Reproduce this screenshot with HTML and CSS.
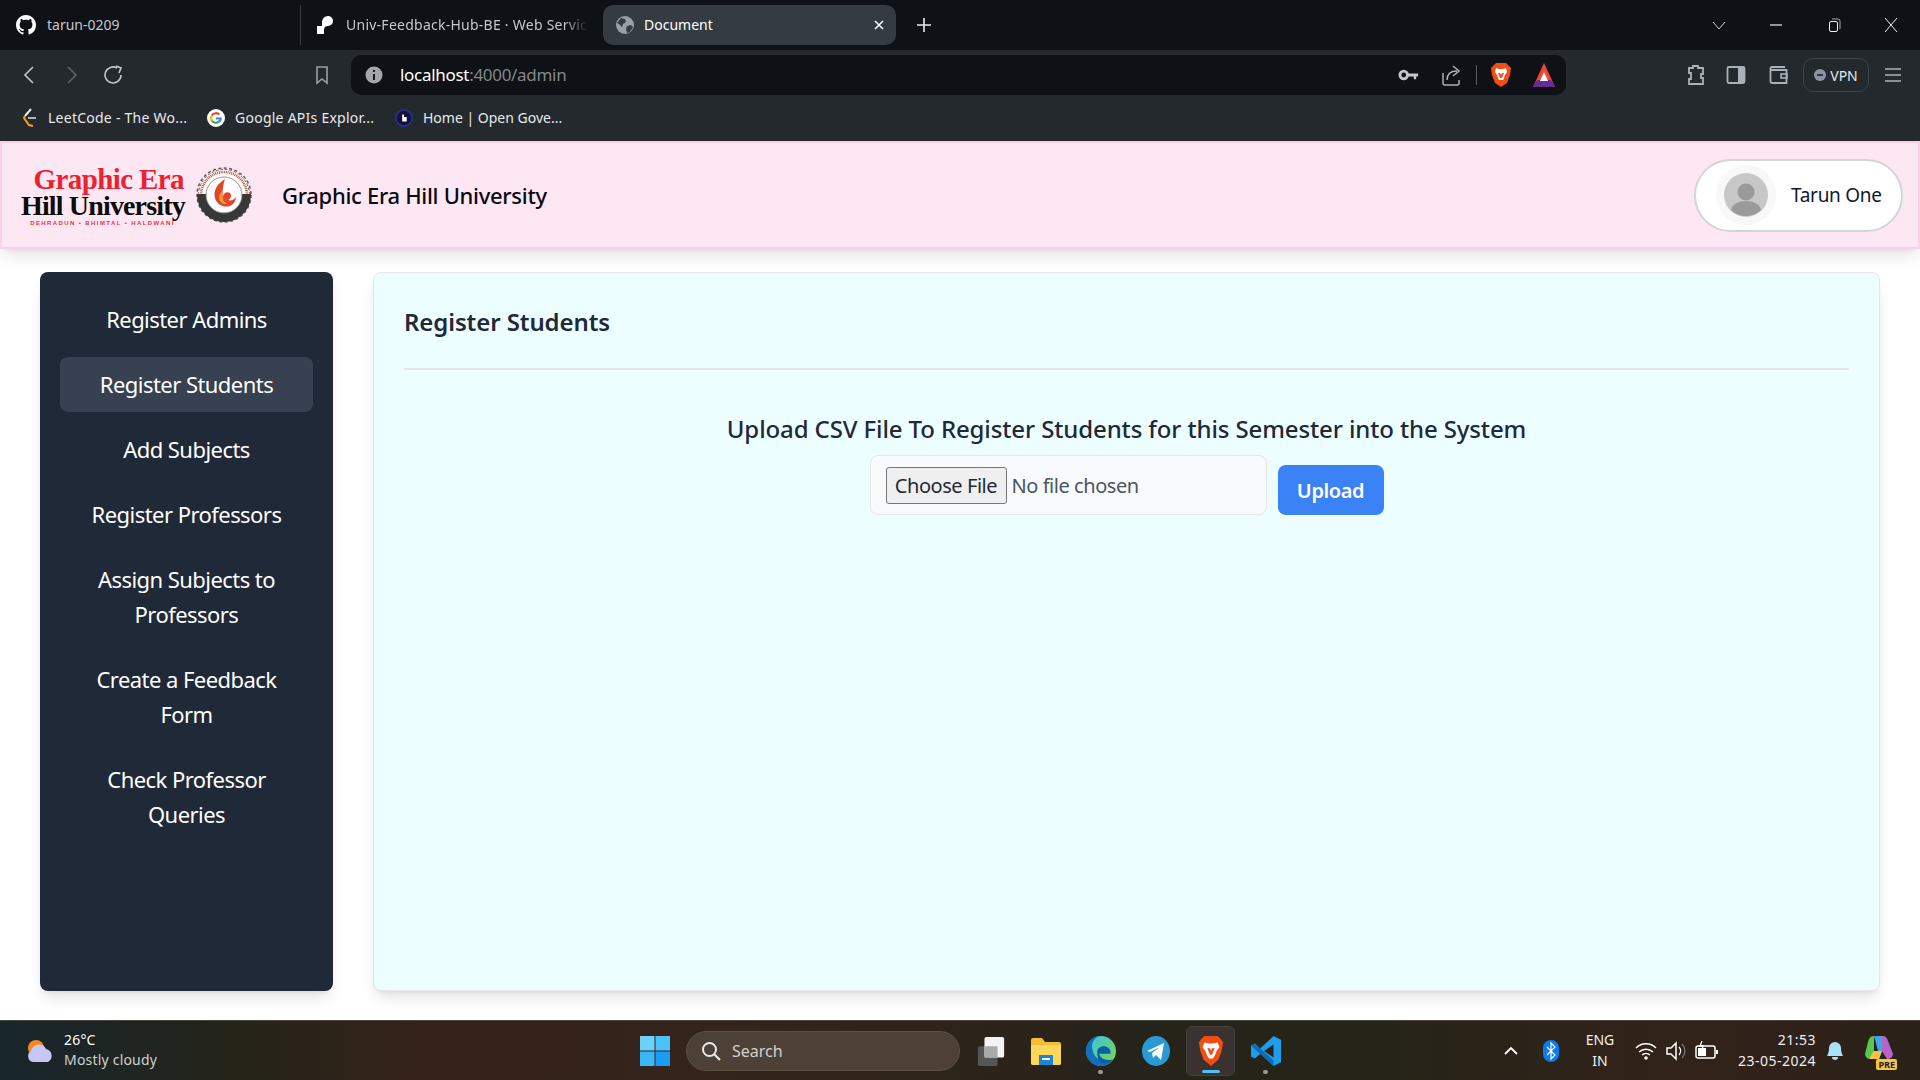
FILE: index.html
```html
<!DOCTYPE html>
<html lang="en">
<head>
    <meta charset="UTF-8">
    <title>Document</title>
    <link rel="stylesheet" href="styles.css">
</head>
<body>
<div class="screen">
    <!-- browser chrome -->
    <div class="tabstrip">
        <div class="tab tab-github">
            <svg class="tab-icon" viewBox="0 0 16 16"><path fill="#fff" d="M8 0C3.58 0 0 3.58 0 8c0 3.54 2.29 6.53 5.47 7.59.4.07.55-.17.55-.38 0-.19-.01-.82-.01-1.49-2.01.37-2.53-.49-2.69-.94-.09-.23-.48-.94-.82-1.13-.28-.15-.68-.52-.01-.53.63-.01 1.08.58 1.23.82.72 1.21 1.87.87 2.33.66.07-.52.28-.87.51-1.07-1.78-.2-3.64-.89-3.64-3.95 0-.87.31-1.59.82-2.15-.08-.2-.36-1.02.08-2.12 0 0 .67-.21 2.2.82.64-.18 1.32-.27 2-.27.68 0 1.36.09 2 .27 1.53-1.04 2.2-.82 2.2-.82.44 1.1.16 1.92.08 2.12.51.56.82 1.27.82 2.15 0 3.07-1.87 3.75-3.65 3.95.29.25.54.73.54 1.48 0 1.07-.01 1.93-.01 2.2 0 .21.15.46.55.38A8.013 8.013 0 0016 8c0-4.42-3.58-8-8-8z"/></svg>
            <span class="tab-title">tarun-0209</span>
        </div>
        <div class="tab tab-render">
            <svg class="tab-icon" viewBox="0 0 20 20"><path fill="#fff" d="M13 1a5 5 0 0 1 5 5 5 5 0 0 1-5 5 4 4 0 0 0-4 4v4H2v-8h5V7a6 6 0 0 1 6-6z"/></svg>
            <span class="tab-title">Univ-Feedback-Hub-BE · Web Servic</span>
        </div>
        <div class="tab tab-active">
            <svg class="tab-icon" viewBox="0 0 20 20"><circle cx="10" cy="10" r="9" fill="#9aa0a6"/><path fill="#343b41" d="M6 3l4 1 1 3-3 2-1 3-3-3-2-1zM12 11l4-1 2 2-3 5-3 1-1-4z"/></svg>
            <span class="tab-title">Document</span>
            <svg class="tab-close" viewBox="0 0 10 10"><path d="M1 1l8 8M9 1l-8 8" stroke="#fff" stroke-width="1.6"/></svg>
        </div>
        <svg class="tab-new" viewBox="0 0 16 16"><path d="M8 1v14M1 8h14" stroke="#e8eaed" stroke-width="1.6"/></svg>
        <div class="spacer"></div>
        <svg class="win-icon win-chevron" viewBox="0 0 14 14"><path d="M1 4l6 7 6-7" fill="none" stroke="#c8ccd0"/></svg>
        <svg class="win-icon win-min" viewBox="0 0 14 14"><path d="M1 7h12" stroke="#eee" stroke-width="1.2"/></svg>
        <svg class="win-icon win-restore" viewBox="0 0 14 14"><rect x="2.5" y="3.5" width="8" height="10" rx="1.5" fill="none" stroke="#eee"/><path d="M5 1h6a2 2 0 0 1 2 2v8" fill="none" stroke="#aaa"/></svg>
        <svg class="win-icon win-close" viewBox="0 0 14 14"><path d="M1 0l12 14M13 0L1 14" stroke="#eee"/></svg>
    </div>

    <div class="toolbar">
        <svg class="nav-icon nav-back" viewBox="0 0 20 20"><path d="M13 2l-8 8 8 8" fill="none" stroke="#c4c8cc" stroke-width="1.6"/></svg>
        <svg class="nav-icon nav-forward" viewBox="0 0 20 20"><path d="M7 2l8 8-8 8" fill="none" stroke="#5d6469" stroke-width="1.6"/></svg>
        <svg class="nav-icon nav-reload" viewBox="0 0 20 20"><path d="M14 3a8 8 0 1 0 4 7" fill="none" stroke="#c4c8cc" stroke-width="1.6"/><path d="M13 1l5 2-2 5" fill="none" stroke="#c4c8cc" stroke-width="1.6"/></svg>
        <svg class="nav-icon nav-bookmark" viewBox="0 0 20 20"><path d="M5 2h10v16l-5-4-5 4z" fill="none" stroke="#9aa1a6" stroke-width="1.6"/></svg>
        <div class="addressbar">
            <svg class="addr-info" viewBox="0 0 18 18"><circle cx="9" cy="9" r="8.500" fill="#a3a7ab"/><path d="M9 8v6M9 4v2" stroke="#16191c" stroke-width="2"/></svg>
            <span class="addr-url"><b>localhost</b>:4000/admin</span>
            <div class="spacer"></div>
            <svg class="addr-key" viewBox="0 0 22 14"><circle cx="6" cy="7" r="4" fill="none" stroke="#c4c8cc" stroke-width="3"/><path d="M10 5.500h11v3h-2v3h-2.500v-3H10z" fill="#c4c8cc"/></svg>
            <svg class="addr-share" viewBox="0 0 20 22"><path d="M2 9v10a2 2 0 0 0 2 2h12a2 2 0 0 0 2-2v-3" fill="none" stroke="#aab0b4" stroke-width="1.500"/><path d="M6 16c0-6 4-9 10-9M12 2l6 5-6 5" fill="none" stroke="#aab0b4" stroke-width="1.500"/></svg>
            <span class="addr-sep"></span>
            <svg class="addr-brave" viewBox="0 0 20 24"><path fill="#f04e13" d="M5 0h10l3 3 2 2-1 7-3 8-6 4-6-4-3-8-1-7 2-2z"/><path fill="#fff" d="M5 5l3 1h4l3-1 1 4-2 3-1 3-1 2h-4l-1-2-1-3-2-3z"/><path fill="#f04e13" d="M7 10h2l1 2 1-2h2l-2 5H9z"/></svg>
            <svg class="addr-bat" viewBox="0 0 22 24"><path fill="#f0492f" d="M11 0l11 24H0z"/><path fill="#662d91" d="M0 24l4-7h14l4 7z"/><path fill="#fff" d="M11 9l4 9H7z"/></svg>
        </div>
        <div class="spacer"></div>
        <svg class="tool-icon tool-ext" viewBox="0 0 20 22"><path d="M3 4h4V2h5v2h5v6h-2v4h2v6H3v-5h2v-6H3z" fill="none" stroke="#a9b2b8" stroke-width="1.800"/></svg>
        <svg class="tool-icon tool-side" viewBox="0 0 20 20"><rect x="1.500" y="2" width="17" height="16" rx="1.500" fill="none" stroke="#a9b2b8" stroke-width="1.800"/><rect x="12" y="2" width="6.500" height="16" fill="#a9b2b8"/></svg>
        <svg class="tool-icon tool-wallet" viewBox="0 0 20 20"><path d="M16 2H3a1.500 1.500 0 0 0-1.500 1.500v13A1.500 1.500 0 0 0 3 18h14.500V5H2" fill="none" stroke="#a9b2b8" stroke-width="1.800"/><rect x="12" y="9" width="6" height="4" fill="none" stroke="#a9b2b8" stroke-width="1.600"/></svg>
        <div class="vpn-pill">
            <svg class="vpn-dot" viewBox="0 0 12 12"><circle cx="6" cy="6" r="6" fill="#8d93a6"/><path d="M3 6h6" stroke="#1d2226" stroke-width="1.600"/></svg>
            <span>VPN</span>
        </div>
        <svg class="tool-icon tool-menu" viewBox="0 0 18 16"><path d="M1 2h16M1 8h16M1 14h16" stroke="#a9b2b8" stroke-width="1.600"/></svg>
    </div>

    <div class="bookmarks">
        <div class="bookmark bm-leet">
            <svg class="bm-icon" viewBox="0 0 18 20"><path d="M11 1L5 8" fill="none" stroke="#e8e8e8" stroke-width="2"/><path d="M5 8l-1 2 5 7 4 1" fill="none" stroke="#f7a21c" stroke-width="2"/><path d="M8 10h8" stroke="#b3b3b3" stroke-width="2"/></svg>
            <span>LeetCode - The Wo...</span>
        </div>
        <div class="bookmark bm-google">
            <svg class="bm-icon" viewBox="0 0 20 20"><circle cx="10" cy="10" r="10" fill="#fff"/><path d="M16 10.500h-6" stroke="#4285f4" stroke-width="2.400"/><path d="M15.500 10.500a5.500 5.500 0 0 1-2 3.500" fill="none" stroke="#4285f4" stroke-width="2.400"/><path d="M13.800 13.700A5.500 5.500 0 0 1 5.400 13" fill="none" stroke="#34a853" stroke-width="2.400"/><path d="M5.400 13a5.500 5.500 0 0 1 0-6" fill="none" stroke="#fbbc05" stroke-width="2.400"/><path d="M5.400 7a5.500 5.500 0 0 1 8.300-.800" fill="none" stroke="#ea4335" stroke-width="2.400"/></svg>
            <span>Google APIs Explor...</span>
        </div>
        <div class="bookmark bm-gov">
            <svg class="bm-icon" viewBox="0 0 20 20"><circle cx="10" cy="10" r="9" fill="#12123a" stroke="#2b2f8f" stroke-width="2"/><path d="M8 6h2v3h3v5H8z" fill="#fff"/></svg>
            <span>Home | Open Gove...</span>
        </div>
    </div>

    <!-- the actual page -->
    <header class="site-header">
        <div class="logo">
            <div class="logo-text">
                <div class="logo-red">Graphic Era</div>
                <div class="logo-black">Hill University</div>
                <div class="logo-places">DEHRADUN • BHIMTAL • HALDWANI</div>
            </div>
            <svg class="logo-seal" viewBox="0 0 56 56">
                <circle cx="28" cy="28" r="26" fill="#fff"/>
                <path d="M5 28a23 23 0 0 1 46 0" fill="none" stroke="#c9553f" stroke-width="2.600" stroke-dasharray="1 .8"/>
                <path d="M2.500 28a25.500 25.500 0 0 1 51 0" fill="none" stroke="#666" stroke-width="1" stroke-dasharray="3 1.500"/>
                <path d="M1 27h9a18 18 0 0 0 36 0h9v1a27 27 0 0 1-54 0z" fill="#383838"/>
                <circle cx="28" cy="28" r="27" fill="none" stroke="#383838" stroke-width="1.500" stroke-dasharray="3 2.500" opacity=".8"/>
                <circle cx="28" cy="28" r="18" fill="#fff" stroke="#777" stroke-width=".8"/>
                <path d="M29 12c-8 5-12 12-10 19 2 7 9 10 15 8 4-2 6-5 6-9-2 3-5 4-8 3 3-1 4-5 2-7-3-2-7 0-7 4-1-6 0-12 2-18z" fill="#e2452a"/>
                <path d="M27 23c-3 3-5 7-3 11 2 3 5 4 8 2-3 0-5-2-5-5 0-3-1-5 0-8z" fill="#f59a3c"/>
            </svg>
        </div>
        <h1 class="site-title">Graphic Era Hill University</h1>
        <div class="spacer"></div>
        <div class="user-pill">
            <div class="avatar-halo">
                <svg class="avatar" viewBox="0 0 44 44"><circle cx="22" cy="22" r="22" fill="#c7c7c7"/><circle cx="22" cy="19" r="8.500" fill="#9a9a9a"/><path d="M7 37c1-6 8-9 15-9s14 3 15 9a22 22 0 0 1-30 0z" fill="#9a9a9a"/></svg>
            </div>
            <span class="user-name">Tarun One</span>
        </div>
    </header>

    <div class="content">
        <nav class="sidebar">
            <a class="side-link">Register Admins</a>
            <a class="side-link active">Register Students</a>
            <a class="side-link">Add Subjects</a>
            <a class="side-link">Register Professors</a>
            <a class="side-link">Assign Subjects to Professors</a>
            <a class="side-link">Create a Feedback Form</a>
            <a class="side-link">Check Professor Queries</a>
        </nav>
        <main class="panel">
            <h2 class="panel-title">Register Students</h2>
            <hr class="panel-rule">
            <h3 class="upload-title">Upload CSV File To Register Students for this Semester into the System</h3>
            <form class="upload-row">
                <div class="file-box">
                    <span class="file-button">Choose File</span>
                    <span class="file-label">No file chosen</span>
                </div>
                <button type="button" class="upload-button">Upload</button>
            </form>
        </main>
    </div>

    <!-- windows taskbar -->
    <div class="taskbar">
        <div class="weather">
            <svg class="weather-icon" viewBox="0 0 30 24"><circle cx="11" cy="9" r="8" fill="#f58a1f"/><path d="M8 23a6 6 0 0 1-2-11 8 8 0 0 1 15-2 7 7 0 0 1 2 13z" fill="#c6c6f7"/></svg>
            <div class="weather-text">
                <div class="weather-temp">26°C</div>
                <div class="weather-desc">Mostly cloudy</div>
            </div>
        </div>
        <svg class="win-logo" viewBox="0 0 30 30">
            <rect width="14.500" height="14.500" fill="#6bd3fb"/><rect x="15.500" width="14.500" height="14.500" fill="#4cc2fa"/>
            <rect y="15.500" width="14.500" height="14.500" fill="#3cb6fb"/><rect x="15.500" y="15.500" width="14.500" height="14.500" fill="#1a9cf5"/>
        </svg>
        <div class="search">
            <svg class="search-icon" viewBox="0 0 20 20"><circle cx="8.500" cy="8.500" r="6.500" fill="none" stroke="#e8e8e8" stroke-width="2"/><path d="M13 13l6 6" stroke="#e8e8e8" stroke-width="2.200"/></svg>
            <span>Search</span>
        </div>
        <div class="task-apps">
            <div class="task-app">
                <svg class="task-icon" viewBox="0 0 30 32"><rect x="1" y="11" width="21" height="21" rx="2" fill="#565656"/><rect x="8" y="1" width="21" height="22" rx="2" fill="#f3f3f3"/><rect x="8" y="11" width="14" height="12" fill="#a9a9a9"/></svg>
            </div>
            <div class="task-app">
                <svg class="task-icon" viewBox="0 0 30 28"><path d="M0 3a2 2 0 0 1 2-2h9l3 4h14a2 2 0 0 1 2 2v19a2 2 0 0 1-2 2H2a2 2 0 0 1-2-2z" fill="#f5bd2f"/><path d="M0 8h30v18a2 2 0 0 1-2 2H2a2 2 0 0 1-2-2z" fill="#fbd85a"/><rect x="8" y="18" width="14" height="10" fill="#1d84d8"/><rect x="11" y="21" width="8" height="2" fill="#fff"/></svg>
            </div>
            <div class="task-app has-dot">
                <svg class="task-icon" viewBox="0 0 32 32">
                    <defs><linearGradient id="edgeTop" x1="0" y1="0" x2="1" y2="1"><stop offset="0" stop-color="#35c1f1"/><stop offset="1" stop-color="#7fd83e"/></linearGradient></defs>
                    <circle cx="16" cy="16" r="16" fill="url(#edgeTop)"/>
                    <path d="M0 16C0 7 7 0 16 0c-7 1-11 7-9 15 1 8 9 13 19 13-3 3-6 4-10 4C7 32 0 25 0 16z" fill="#1170bd"/>
                    <path d="M12 17c0-4 4-7 8-6 5 1 7 5 6 8H14c1 5 7 8 15 6-3 4-9 6-14 3-2-2-3-7-3-11z" fill="#0d5ea8"/>
                </svg>
            </div>
            <div class="task-app">
                <svg class="task-icon" viewBox="0 0 28 30"><ellipse cx="14" cy="15" rx="14" ry="15" fill="#2a9ad6"/><path d="M5 15L22 7l-3 17-5-5-3 3-1-5 8-6-10 5z" fill="#fff"/></svg>
            </div>
            <div class="task-app task-active">
                <svg class="task-icon" viewBox="0 0 26 32"><path fill="#f04e13" d="M6 0h14l3 3 3 4-2 10-3 8-8 7-8-7-3-8L0 7l3-4z"/><path fill="#fff" d="M6 7l5 1h4l5-1 2 5-3 4-2 5-2 3h-4l-2-3-2-5-3-4z"/><path fill="#f04e13" d="M9 13h3l1 3 1-3h3l-3 7h-2z"/></svg>
                <span class="active-bar"></span>
            </div>
            <div class="task-app has-dot">
                <svg class="task-icon" viewBox="0 0 32 32"><path d="M24 0l8 4v24l-8 4-14-13-6 5-4-2V10l4-2 6 5z" fill="#1e9ee8"/><path d="M24 9L14 16l10 7z" fill="#2a221b"/><path d="M0 10l4-2 20 18v6L0 10z" fill="#0b6db3"/></svg>
            </div>
        </div>
        <div class="spacer"></div>
        <div class="tray">
            <svg class="tray-caret" viewBox="0 0 14 10"><path d="M1 8l6-6 6 6" fill="none" stroke="#fff" stroke-width="1.800"/></svg>
            <svg class="tray-bt" viewBox="0 0 16 22"><rect width="16" height="22" rx="8" fill="#0a7cf0"/><path d="M4 7l8 8-4 4V3l4 4-8 8" fill="none" stroke="#fff" stroke-width="1.200"/></svg>
            <div class="tray-lang">ENG<br>IN</div>
            <svg class="tray-wifi" viewBox="0 0 22 20"><path d="M1 7a14 14 0 0 1 20 0M4 11a10 10 0 0 1 14 0M7 14a6 6 0 0 1 8 0" fill="none" stroke="#fff" stroke-width="1.500"/><circle cx="11" cy="17" r="1.800" fill="#fff"/></svg>
            <svg class="tray-vol" viewBox="0 0 22 20"><path d="M1 7h4l5-5v16l-5-5H1z" fill="none" stroke="#fff" stroke-width="1.500"/><path d="M13 6a6 6 0 0 1 0 8" fill="none" stroke="#fff" stroke-width="1.300"/><path d="M16 3a10 10 0 0 1 0 14" fill="none" stroke="#777" stroke-width="1.300"/></svg>
            <svg class="tray-bat" viewBox="0 0 24 20"><rect x="1" y="5" width="19" height="12" rx="2" fill="none" stroke="#fff" stroke-width="1.500"/><rect x="21" y="9" width="2" height="4" fill="#fff"/><rect x="3" y="7" width="8" height="8" fill="#fff"/><path d="M7 0l-2 5h3l-1 4" fill="none" stroke="#fff" stroke-width="1.300"/></svg>
            <div class="tray-clock">21:53<br>23-05-2024</div>
            <svg class="tray-bell" viewBox="0 0 18 20"><path d="M9 1a6 6 0 0 1 6 6c0 4 1 6 2 8H1c1-2 2-4 2-8a6 6 0 0 1 6-6z" fill="#a8e3f5"/><path d="M6 16h6a3 3 0 0 1-6 0z" fill="#a8e3f5"/></svg>
            <div class="copilot">
                <svg class="copilot-icon" viewBox="0 0 30 26">
                    <path d="M9 0h8l5 15h-9z" fill="#39a9e8"/><path d="M17 0c4 0 5 2 6 5l5 13c0 3-3 5-6 5l-5-8z" fill="#b565c9"/>
                    <path d="M9 0C5 0 4 3 3 6L0 18c0 3 3 5 5 5h9l3-8H9z" fill="#57c84d"/><path d="M5 23c0-3 2-6 4-8h8l-3 8z" fill="#f5c542"/>
                </svg>
                <span class="pre-badge">PRE</span>
            </div>
        </div>
    </div>
</div>
</body>
</html>
```

FILE: styles.css
```css
* {
    box-sizing: border-box;
}
html, body {
    margin: 0;
    padding: 0;
}
body {
    font-family: "Noto Sans", "Open Sans", sans-serif;
    background-color: #fff;
    overflow: hidden;
}
svg {
    display: block;
    flex-shrink: 0;
}
.screen {
    width: 1920px;
    height: 1080px;
    display: flex;
    flex-direction: column;
}
.spacer {
    flex: 1;
}

/* tab strip */
.tabstrip {
    height: 50px;
    background-color: #0e1116;
    display: flex;
    align-items: center;
    color: #c4c8cc;
    font-size: 14px;
}
.tab {
    display: flex;
    align-items: center;
    height: 40px;
}
.tab-icon {
    width: 20px;
    height: 20px;
}
.tab-github {
    width: 301px;
    padding-left: 16px;
    gap: 11px;
    border-right: 1px solid #3a3f44;
}
.tab-render {
    width: 302px;
    padding-left: 14px;
    gap: 11px;
}
.tab-title {
    white-space: nowrap;
    margin-bottom: 1px;
}
.tab-render .tab-title {
    width: 242px;
    letter-spacing: 0.25px;
    -webkit-mask-image: linear-gradient(90deg, #000 90%, transparent);
    mask-image: linear-gradient(90deg, #000 90%, transparent);
}
.tab-active {
    width: 293px;
    background-color: #343b41;
    border-radius: 10px;
    color: #fff;
    padding: 0 12px 0 12px;
    gap: 9px;
}
.tab-active .tab-title {
    flex: 1;
}
.tab-close {
    width: 10px;
    height: 10px;
}
.tab-new {
    width: 16px;
    height: 16px;
    margin-left: 20px;
}
.win-icon {
    width: 14px;
    height: 14px;
}
.win-chevron {
    margin-right: 43px;
}
.win-min {
    margin-right: 44px;
}
.win-restore {
    margin-right: 43px;
}
.win-close {
    margin-right: 22px;
}

/* toolbar */
.toolbar {
    height: 47px;
    background-color: #23292d;
    display: flex;
    align-items: center;
    padding-top: 3px;
}
.nav-icon {
    width: 20px;
    height: 20px;
}
.nav-back {
    margin-left: 20px;
}
.nav-forward {
    margin-left: 21px;
}
.nav-reload {
    margin-left: 22px;
}
.nav-bookmark {
    margin-left: 189px;
}
.addressbar {
    width: 1215px;
    height: 40px;
    margin-left: 19px;
    background-color: #0e1116;
    border-radius: 10px;
    display: flex;
    align-items: center;
    padding-left: 14px;
}
.addr-info {
    width: 18px;
    height: 18px;
}
.addr-url {
    margin-left: 17px;
    margin-bottom: 2px;
    font-size: 17px;
    color: #83888c;
    letter-spacing: -0.3px;
}
.addr-url b {
    font-weight: 400;
    color: #fff;
}
.addr-key {
    width: 21px;
    height: 14px;
}
.addr-share {
    width: 20px;
    height: 22px;
    margin-left: 22px;
}
.addr-sep {
    width: 1px;
    height: 20px;
    background-color: #555b60;
    margin-left: 15px;
}
.addr-brave {
    width: 20px;
    height: 24px;
    margin-left: 14px;
}
.addr-bat {
    width: 22px;
    height: 24px;
    margin-left: 22px;
    margin-right: 11px;
}
.tool-icon {
    width: 20px;
    height: 20px;
}
.tool-ext {
    height: 22px;
}
.tool-side {
    margin-left: 20px;
}
.tool-wallet {
    margin-left: 23px;
}
.tool-menu {
    width: 18px;
    height: 16px;
    margin-left: 15px;
    margin-right: 18px;
}
.vpn-pill {
    width: 66px;
    height: 34px;
    margin-left: 14px;
    border: 1px solid #3f464b;
    border-radius: 10px;
    display: flex;
    align-items: center;
    justify-content: center;
    gap: 4px;
    color: #e6e8ea;
    font-size: 14px;
}
.vpn-dot {
    width: 12px;
    height: 12px;
}

/* bookmarks */
.bookmarks {
    height: 44px;
    padding-bottom: 3px;
    background-color: #23292d;
    display: flex;
    align-items: center;
    color: #e8eaed;
    font-size: 14px;
    letter-spacing: 0.25px;
}
.bookmark {
    display: flex;
    align-items: center;
    white-space: nowrap;
}
.bm-icon {
    width: 18px;
    height: 20px;
}
.bm-leet {
    width: 207px;
    padding-left: 20px;
    gap: 10px;
}
.bm-google {
    width: 188px;
    gap: 10px;
}
.bm-gov {
    gap: 10px;
    letter-spacing: 0;
}

/* site header */
.site-header {
    height: 108px;
    background-color: #fce7f3;
    border: 2px solid #fbcfe8;
    display: flex;
    align-items: center;
    box-shadow: 0 10px 15px -3px rgba(0,0,0,0.1), 0 4px 6px -4px rgba(0,0,0,0.1);
    position: relative;
    z-index: 1;
    padding-right: 15px;
}
.logo {
    display: flex;
    align-items: center;
    margin-left: 19px;
}
.logo-text {
    width: 163px;
    font-family: "Liberation Serif", serif;
    font-weight: 700;
    text-align: right;
}
.logo-red {
    color: #ee2030;
    font-size: 29px;
    line-height: 28px;
    letter-spacing: -0.6px;
    padding-top: 2px;
}
.logo-black {
    color: #0c0c0c;
    font-size: 28px;
    line-height: 25px;
    letter-spacing: -0.85px;
    white-space: nowrap;
}
.logo-places {
    color: #ee3040;
    font-family: "Liberation Sans", sans-serif;
    font-size: 6px;
    line-height: 10px;
    letter-spacing: 1.4px;
    text-align: center;
    white-space: nowrap;
}
.logo-seal {
    width: 56px;
    height: 56px;
    margin-left: 12px;
}
.site-title {
    margin: 0 0 0 30px;
    font-size: 22px;
    font-weight: 500;
    color: #0a0a14;
    letter-spacing: -0.3px;
}
.user-pill {
    width: 209px;
    height: 73px;
    background-color: #fff;
    border: 2px solid #d1d5db;
    border-radius: 37px;
    display: flex;
    align-items: center;
    padding-left: 20px;
}
.avatar-halo {
    width: 60px;
    height: 60px;
    border-radius: 50%;
    background-color: #f8f8f8;
    display: flex;
    align-items: center;
    justify-content: center;
}
.avatar {
    width: 44px;
    height: 44px;
}
.user-name {
    margin-left: 15px;
    font-size: 19px;
    color: #111827;
    letter-spacing: -0.3px;
}

/* page content */
.content {
    flex: 1;
    display: flex;
    gap: 40px;
    padding: 23px 40px 29px;
    background-color: #fff;
}
.sidebar {
    width: 293px;
    background-color: #1f2937;
    border-radius: 8px;
    padding: 20px;
    display: flex;
    flex-direction: column;
    gap: 10px;
    box-shadow: 0 10px 15px -3px rgba(0,0,0,0.1), 0 4px 6px -4px rgba(0,0,0,0.1);
}
.side-link {
    padding: 10px 16px;
    border-radius: 8px;
    color: #fff;
    font-size: 22px;
    line-height: 35px;
    letter-spacing: -0.55px;
    text-align: center;
}
.side-link.active {
    background-color: #374151;
}
.panel {
    flex: 1;
    background-color: #ecfeff;
    border: 1px solid #e5e7eb;
    border-radius: 8px;
    padding: 32px 30px 30px;
    box-shadow: 0 10px 15px -3px rgba(0,0,0,0.1), 0 4px 6px -4px rgba(0,0,0,0.1);
}
.panel-title {
    margin: 0;
    font-size: 24px;
    line-height: 34px;
    font-weight: 600;
    color: #1f2937;
    letter-spacing: -0.1px;
}
.panel-rule {
    border: none;
    height: 2px;
    background-color: #e5e7eb;
    margin: 29px 0 0;
}
.upload-title {
    margin: 42px 0 0;
    font-size: 24px;
    line-height: 34px;
    font-weight: 500;
    color: #1f2937;
    text-align: center;
    letter-spacing: -0.12px;
}
.upload-row {
    display: flex;
    justify-content: center;
    align-items: flex-end;
    gap: 11px;
    margin-top: 9px;
}
.file-box {
    width: 397px;
    height: 60px;
    background-color: #f9fafb;
    border: 1px solid #e5e7eb;
    border-radius: 8px;
    display: flex;
    align-items: center;
    padding-left: 15px;
    font-size: 20px;
    letter-spacing: -0.45px;
}
.file-button {
    width: 121px;
    height: 37px;
    background-color: #efefef;
    border: 1px solid #767676;
    border-radius: 3px;
    color: #1f2937;
    display: flex;
    align-items: center;
    justify-content: center;
}
.file-label {
    margin-left: 5px;
    color: #4b5563;
}
.upload-button {
    width: 106px;
    height: 50px;
    background-color: #3b82f6;
    color: #fff;
    border: none;
    border-radius: 8px;
    font-family: inherit;
    font-size: 20px;
    font-weight: 600;
    letter-spacing: -0.4px;
}

/* taskbar */
.taskbar {
    height: 60px;
    background: linear-gradient(90deg, #18262c 0%, #242419 12%, #35221a 22%, #33241a 40%, #26231a 60%, #262418 72%, #32221a 88%, #2a2119 100%);
    border-top: 1px solid #4a443e;
    display: flex;
    align-items: center;
    color: #e9e9e9;
    position: relative;
    z-index: 2;
}
.weather {
    width: 640px;
    display: flex;
    align-items: center;
    padding-left: 25px;
    gap: 9px;
}
.weather-icon {
    width: 30px;
    height: 24px;
}
.weather-text {
    font-size: 14px;
    line-height: 20px;
    letter-spacing: 0.2px;
    margin-bottom: 2px;
}
.weather-temp {
    color: #fff;
}
.weather-desc {
    color: #d0d0d0;
}
.win-logo {
    width: 30px;
    height: 30px;
}
.search {
    width: 274px;
    height: 40px;
    margin-left: 16px;
    background-color: #4d4137;
    border: 1px solid #5b5046;
    border-radius: 20px;
    display: flex;
    align-items: center;
    padding-left: 14px;
    gap: 11px;
    font-size: 16px;
    color: #d4d0cc;
}
.search-icon {
    width: 20px;
    height: 20px;
}
.task-apps {
    display: flex;
    align-items: center;
    gap: 6px;
    margin-left: 6px;
}
.task-app {
    width: 49px;
    height: 50px;
    border-radius: 6px;
    display: flex;
    align-items: center;
    justify-content: center;
    position: relative;
}
.task-icon {
    width: 30px;
    height: 30px;
}
.task-active {
    background-color: #3a3230;
    border: 1px solid #45403a;
}
.active-bar {
    position: absolute;
    bottom: 2px;
    left: 15px;
    width: 18px;
    height: 3px;
    border-radius: 2px;
    background-color: #4cc2ff;
}
.has-dot::after {
    content: "";
    position: absolute;
    bottom: 2px;
    left: 22px;
    width: 5px;
    height: 4px;
    border-radius: 2px;
    background-color: #9a9a9a;
}
.tray {
    display: flex;
    align-items: center;
    color: #f0f0f0;
    font-size: 14px;
    line-height: 21px;
}
.tray-caret {
    width: 14px;
    height: 10px;
}
.tray-bt {
    width: 16px;
    height: 22px;
    margin-left: 25px;
}
.tray-lang {
    width: 40px;
    margin-left: 21px;
    margin-bottom: 2px;
    text-align: center;
}
.tray-wifi {
    width: 22px;
    height: 20px;
    margin-left: 15px;
}
.tray-vol {
    width: 22px;
    height: 20px;
    margin-left: 9px;
}
.tray-bat {
    width: 24px;
    height: 20px;
    margin-left: 7px;
}
.tray-clock {
    width: 80px;
    margin-left: 17px;
    margin-bottom: 2px;
    text-align: right;
    white-space: nowrap;
    letter-spacing: 0.5px;
}
.tray-bell {
    width: 18px;
    height: 20px;
    margin-left: 10px;
}
.copilot {
    width: 30px;
    height: 30px;
    margin-left: 21px;
    margin-right: 25px;
    position: relative;
}
.copilot-icon {
    width: 30px;
    height: 26px;
}
.pre-badge {
    position: absolute;
    right: -2px;
    bottom: -4px;
    background-color: #f5c542;
    color: #222;
    font-size: 9px;
    line-height: 11px;
    font-weight: 700;
    padding: 0 2px;
    border-radius: 2px;
}
```
